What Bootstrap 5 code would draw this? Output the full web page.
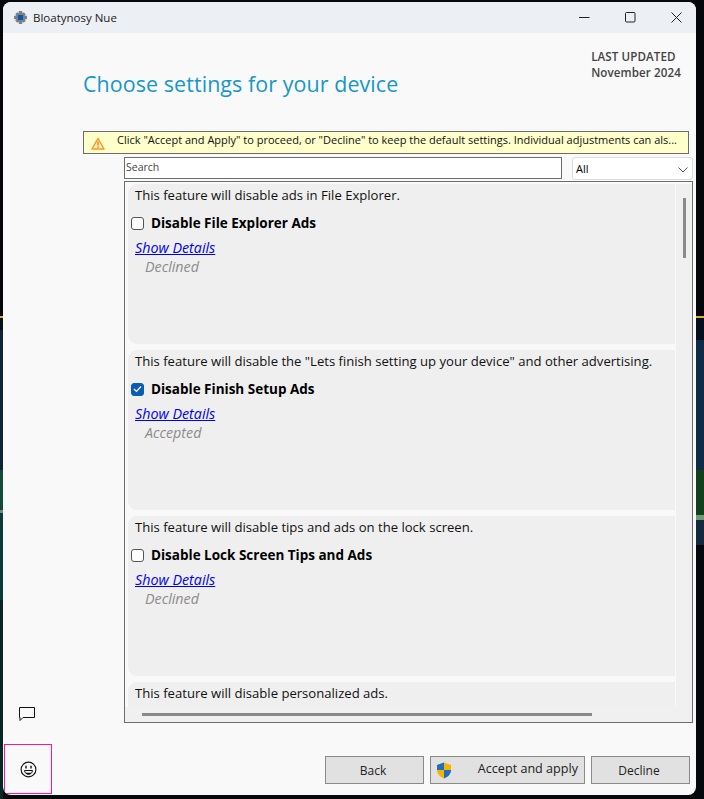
<!DOCTYPE html>
<html lang="en"><head><meta charset="utf-8"><title>Bloatynosy Nue</title>
<link href="https://cdn.jsdelivr.net/npm/bootstrap@5.3.0/dist/css/bootstrap.min.css" rel="stylesheet">
<style>
html,body{height:100%;overflow:hidden}
body{font-family:"Open Sans","Noto Sans",sans-serif;color:#000;
background:
linear-gradient(#04060a 0 316px,#d8b02a 316px 318px,#06101c 318px 330px,#0f2238 330px 470px,#144a3a 470px 510px,#7a8a70 510px 513px,#0c3a3a 513px 600px,#082622 600px 799px) left top/3px 100% no-repeat,
linear-gradient(#04060a 0 316px,#d8b02a 316px 318px,#06101c 318px 340px,#0f2c44 340px 470px,#12401c 470px 515px,#6f9a70 515px 520px,#142a3c 520px 545px,#05080c 545px 799px) right top/8px 100% no-repeat,
#06080c}
.appwin{width:693px;height:793px;margin:2px 0 0 3px;background:#f9f9f9;border-radius:8px;overflow:hidden}
.tbar{height:31px;background:#eceff4;font-size:11.5px;color:#222}
.tbar-logo{margin:0 5px 0 10px}
.tbar-ctrls{margin-right:-3px}
.tbar-ctrl{width:46px;height:31px}
.topsec{height:98px;padding-left:80px}
.headline{font-size:21.4px;color:#1597c8;margin:38px 0 0;font-weight:400;letter-spacing:.1px}
.updated{font-size:11.6px;font-weight:600;color:#444;line-height:16px;margin:16px 15px 0 0;letter-spacing:.1px}
.warnbar{margin-left:80px;width:606px;height:23px;background:#ffffcc;border:1px solid #6d6d6d;font-size:11px;color:#111;white-space:nowrap}
.warnbar svg{margin:2px 12px 0 7px;flex:none}
.warntxt{margin-top:-4px}
.rail{width:121px;padding:0 0 1px 15px}
.mainc{width:569px}
.srch{width:438px;height:22px;border:1px solid #6d6d6d;background:#fff;font-size:10.5px;color:#444;padding:0 1px;margin-top:3px;line-height:18px}
.pick{width:121px;height:23px;border:1px solid #dcdcdc;border-radius:3px;background:#fff;font-size:11px;margin-top:3px;padding:2px 3px 0 3px}
.scroller{height:542px;margin-top:1px;border:1px solid #6d6d6d;background:#f9f9f9;padding-top:2px}
.fcol{width:551px;height:523px;overflow:hidden;padding:0 1px 0 3px;gap:6px}
.fitem{height:160px;flex:none;background:#efefef;border-radius:9px 0 0 9px;padding-left:7px;font-size:13.1px;color:#111;line-height:20px}
.fitem .desc{padding-top:1px}
.ftitle{font-size:13.5px;font-weight:700;color:#000;margin-top:8px;margin-left:-4px;line-height:20px}
.fcheck{width:13px;height:13px;border:1.5px solid #555;border-radius:3px;background:#fff;margin-right:7px;flex:none}
.fcheck.on{background:#0b5cb5;border-color:#0b5cb5}
.slink{display:block;font-style:italic;color:#0000ee;text-decoration:underline;font-size:14.3px;margin-top:5px;line-height:20px}
.fstate{font-style:italic;color:#8c8c8c;font-size:14.3px;padding-left:10px;line-height:18px}
.vtrack{width:16px;background:#f0f0f0}
.vthumb{width:3px;height:60px;background:#8a8a8a;margin:14px 0 0 7px}
.htrack{flex:1;background:#f0f0f0;padding:6px 0 0 17px}
.hthumb{width:450px;height:3px;background:#8a8a8a}
.bottomrow{height:72px}
.smilebox{width:48px;height:50px;border:1px solid #ff1493;margin:21px 0 0 1px}
.wbtn{height:28px;background:#e1e1e1;border:1px solid #8a8a8a;font-size:12px;color:#222;margin-top:33px}
.wbtn-a{width:99px}.wbtn-b{width:155px}.wbtn-c{width:99px}
.btnset{margin-right:6px;gap:6px}
.lbl-a{margin:2px 3px 0 0}
.acctext{margin:-1px 6px 0 auto;font-size:12.6px}
.wbtn-b svg{margin-left:5px}
</style></head><body>
<div class="appwin d-flex flex-column">
 <div class="tbar d-flex align-items-center">
  <svg class="tbar-logo" width="15" height="15" viewBox="0 0 15 15"><g fill="#7a8087"><circle cx="7.500" cy="7.500" r="5"/><rect x="5.800" y="1" width="3.400" height="13"/><rect x="1" y="5.800" width="13" height="3.400"/><rect x="6" y="1.500" width="3" height="12" transform="rotate(45 7.500 7.500)"/><rect x="6" y="1.500" width="3" height="12" transform="rotate(-45 7.500 7.500)"/></g><rect x="5" y="5" width="5" height="5" fill="#0b57b0"/></svg>
  <span>Bloatynosy Nue</span>
  <div class="tbar-ctrls ms-auto d-flex">
   <div class="tbar-ctrl d-flex align-items-center justify-content-center"><svg width="11" height="11"><path d="M0 5.500h10.500" stroke="#222"/></svg></div>
   <div class="tbar-ctrl d-flex align-items-center justify-content-center"><svg width="11" height="11"><rect x=".5" y=".5" width="9.500" height="9.500" rx="1" fill="none" stroke="#222"/></svg></div>
   <div class="tbar-ctrl d-flex align-items-center justify-content-center"><svg width="11" height="11"><path d="M.5.500l10 10m0-10l-10 10" stroke="#222"/></svg></div>
  </div>
 </div>
 <div class="topsec d-flex justify-content-between">
  <h1 class="headline">Choose settings for your device</h1>
  <div class="updated">LAST UPDATED<br>November 2024</div>
 </div>
 <div class="warnbar d-flex align-items-center">
  <svg width="14" height="13" viewBox="0 0 14 13"><path d="M7 1.500L13 12H1z" fill="#fff2c0" stroke="#f59a23" stroke-width="1.500" stroke-linejoin="round"/><path d="M7 4.500v4M7 9.300v1.500" stroke="#ee8a1a" stroke-width="1.500"/></svg>
  <span class="warntxt">Click "Accept and Apply" to proceed, or "Decline" to keep the default settings. Individual adjustments can als...</span>
 </div>
 <div class="d-flex flex-grow-1">
  <div class="rail d-flex align-items-end">
   <svg width="18" height="16" viewBox="0 0 18 16"><path d="M1.500 1.500h15v10H5l-3 3v-3H1.500z" fill="none" stroke="#111"/></svg>
  </div>
  <div class="mainc">
   <div class="d-flex justify-content-between">
    <div class="srch">Search</div>
    <div class="pick d-flex align-items-center justify-content-between"><span>All</span><svg width="12" height="8"><path d="M1.500 1.500l4.500 4.500 4.500-4.500" fill="none" stroke="#555"/></svg></div>
   </div>
   <div class="scroller d-flex flex-column">
    <div class="d-flex">
     <div class="fcol d-flex flex-column">
      <div class="fitem"><div class="desc">This feature will disable ads in File Explorer.</div><div class="ftitle d-flex align-items-center"><span class="fcheck"></span>Disable File Explorer Ads</div><a class="slink" href="#">Show Details</a><div class="fstate">Declined</div></div>
      <div class="fitem"><div class="desc">This feature will disable the "Lets finish setting up your device" and other advertising.</div><div class="ftitle d-flex align-items-center"><span class="fcheck on d-flex align-items-center justify-content-center"><svg width="9" height="8"><path d="M1 4l2.500 2.500L8 1.500" fill="none" stroke="#fff" stroke-width="1.200"/></svg></span>Disable Finish Setup Ads</div><a class="slink" href="#">Show Details</a><div class="fstate">Accepted</div></div>
      <div class="fitem"><div class="desc">This feature will disable tips and ads on the lock screen.</div><div class="ftitle d-flex align-items-center"><span class="fcheck"></span>Disable Lock Screen Tips and Ads</div><a class="slink" href="#">Show Details</a><div class="fstate">Declined</div></div>
      <div class="fitem"><div class="desc">This feature will disable personalized ads.</div></div>
     </div>
     <div class="vtrack"><div class="vthumb"></div></div>
    </div>
    <div class="htrack"><div class="hthumb"></div></div>
   </div>
  </div>
 </div>
 <div class="bottomrow d-flex justify-content-between">
  <div class="smilebox d-flex align-items-center justify-content-center"><svg width="17" height="17" viewBox="0 0 17 17"><circle cx="8.500" cy="8.500" r="7.400" fill="none" stroke="#111" stroke-width="1.100"/><path d="M6 4.800v2.800M11 4.800v2.800" stroke="#111" stroke-width="1.400"/><path d="M4.500 9.500h8c-.3 2.500-2 3.800-4 3.800s-3.700-1.300-4-3.800z" fill="#fff" stroke="#111"/><path d="M5.500 11.800h6c-.8 1-1.800 1.500-3 1.500s-2.200-.5-3-1.500z" fill="#111"/></svg></div>
  <div class="btnset d-flex">
   <div class="wbtn wbtn-a d-flex align-items-center justify-content-center"><span class="lbl-a">Back</span></div>
   <div class="wbtn wbtn-b d-flex align-items-center"><svg width="16" height="17" viewBox="0 0 16 17"><path d="M8 .500l7 2.500v5c0 4-3 7-7 8.500-4-1.500-7-4.500-7-8.500V3z" fill="#f7b500"/><path d="M8 .500V8H1V3zM8 8h7c0 4-3 7-7 8.500z" fill="#1d6fc4"/></svg><span class="acctext">Accept and apply</span></div>
   <div class="wbtn wbtn-c d-flex align-items-center justify-content-center"><span class="lbl-a">Decline</span></div>
  </div>
 </div>
</div>
<script src="https://cdn.jsdelivr.net/npm/bootstrap@5.3.0/dist/js/bootstrap.bundle.min.js"></script>
</body></html>
